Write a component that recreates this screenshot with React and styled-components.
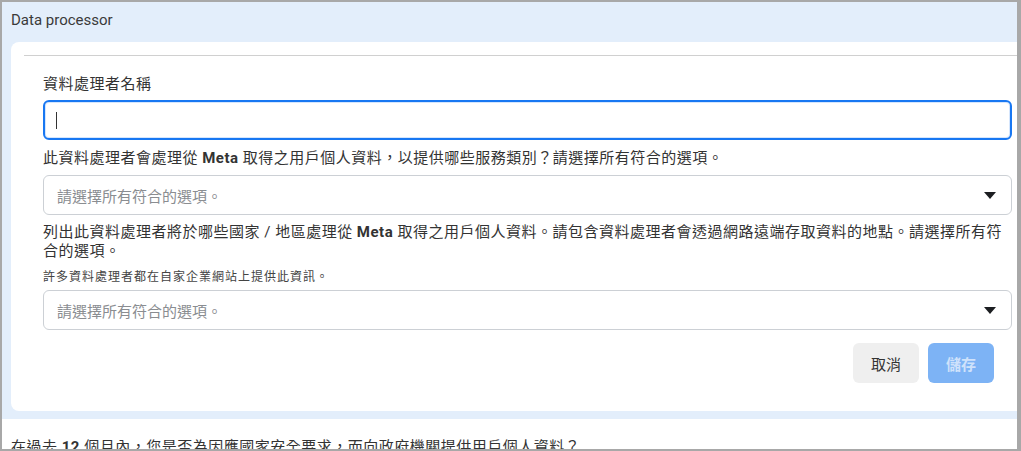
import React from "react";
import styled, { createGlobalStyle } from "styled-components";

const GlobalStyle = createGlobalStyle`
	* {
		box-sizing: border-box;
	}
	body {
		margin: 0;
		background: #ffffff;
		font-family: Roboto, "Noto Sans CJK TC", sans-serif;
	}
`;

const Frame = styled.div`
	width: 1021px;
	height: 451px;
	border: 2px solid #a8a8a8;
	border-right-width: 4px;
	overflow: hidden;
	background: #ffffff;
`;

const Panel = styled.section`
	background: #e3eefb;
	padding: 0 0 8px 9px;
`;

const PanelTitle = styled.div`
	height: 40px;
	display: flex;
	align-items: center;
	font-size: 15px;
	color: #3a3a3a;
	margin-top: -2px;
`;

const Card = styled.div`
	background: #ffffff;
	border-radius: 8px 0 0 8px;
	padding: 13px 0 28px 13px;
	margin-top: 2px;
`;

const Divider = styled.hr`
	margin: 0;
	border: none;
	border-top: 1px solid #d0d0d0;
`;

const Form = styled.div`
	display: flex;
	flex-direction: column;
	padding: 19px 5px 0 19px;
`;

const Label = styled.div`
	font-size: 15px;
	line-height: 19px;
	letter-spacing: 0.5px;
	color: #333333;
	margin-bottom: ${(p) => p.$gap || 6}px;

	b {
		font-weight: 700;
	}
`;

const Help = styled.div`
	font-size: 12px;
	letter-spacing: 1px;
	line-height: 16px;
	color: #444444;
	margin-top: 2px;
	margin-bottom: 5px;
`;

const TextBox = styled.div`
	height: 40px;
	border: 2px solid #1877f2;
	box-shadow: inset 0 0 0 1px rgba(24, 119, 242, 0.18);
	border-radius: 6px;
	display: flex;
	align-items: center;
	padding-left: 11px;
	margin-bottom: 9px;
`;

const Caret = styled.span`
	width: 1px;
	height: 17px;
	background: #333333;
`;

const Select = styled.div`
	height: 40px;
	border: 1px solid #ccd0d5;
	border-radius: 6px;
	display: flex;
	align-items: center;
	justify-content: space-between;
	padding: 0 15px 0 13px;
	margin-bottom: ${(p) => p.$gap || 0}px;
`;

const Placeholder = styled.span`
	font-size: 15px;
	color: #8a8d91;
`;

const Arrow = styled.span`
	width: 0;
	height: 0;
	border-left: 6px solid transparent;
	border-right: 6px solid transparent;
	border-top: 7px solid #1c1e21;
`;

const Actions = styled.div`
	display: flex;
	justify-content: flex-end;
	gap: 9px;
	padding-right: 18px;
	margin-top: 13px;
`;

const Button = styled.button`
	width: 66px;
	height: 40px;
	border: none;
	border-radius: 6px;
	font-family: Roboto, "Noto Sans CJK TC", sans-serif;
	font-size: 15px;
	background: ${(p) => (p.$primary ? "#7db3f5" : "#efefef")};
	color: ${(p) => (p.$primary ? "#cfe2fb" : "#333333")};
	font-weight: ${(p) => (p.$primary ? 700 : 400)};
	cursor: pointer;
`;

const Question = styled.div`
	padding: 16px 0 0 9px;
	font-size: 15px;
	letter-spacing: 0.5px;
	color: #333333;
	white-space: nowrap;
`;

const App = () => {
	return (
		<>
			<GlobalStyle />
			<Frame>
				<Panel>
					<PanelTitle>Data processor</PanelTitle>
					<Card>
						<Divider />
						<Form>
							<Label $gap={6}>資料處理者名稱</Label>
							<TextBox>
								<Caret />
							</TextBox>
							<Label $gap={7}>
								此資料處理者會處理從 <b>Meta</b> 取得之用戶個人資料，以提供哪些服務類別？請選擇所有符合的選項。
							</Label>
							<Select $gap={8}>
								<Placeholder>請選擇所有符合的選項。</Placeholder>
								<Arrow />
							</Select>
							<Label $gap={0}>
								列出此資料處理者將於哪些國家 / 地區處理從 <b>Meta</b> 取得之用戶個人資料。請包含資料處理者會透過網路遠端存取資料的地點。請選擇所有符合的選項。
							</Label>
							<Help>許多資料處理者都在自家企業網站上提供此資訊。</Help>
							<Select>
								<Placeholder>請選擇所有符合的選項。</Placeholder>
								<Arrow />
							</Select>
							<Actions>
								<Button>取消</Button>
								<Button $primary>儲存</Button>
							</Actions>
						</Form>
					</Card>
				</Panel>
				<Question>
					在過去 <b>12</b> 個月內，您是否為因應國家安全要求，而向政府機關提供用戶個人資料？
				</Question>
			</Frame>
		</>
	);
};

export default App;
